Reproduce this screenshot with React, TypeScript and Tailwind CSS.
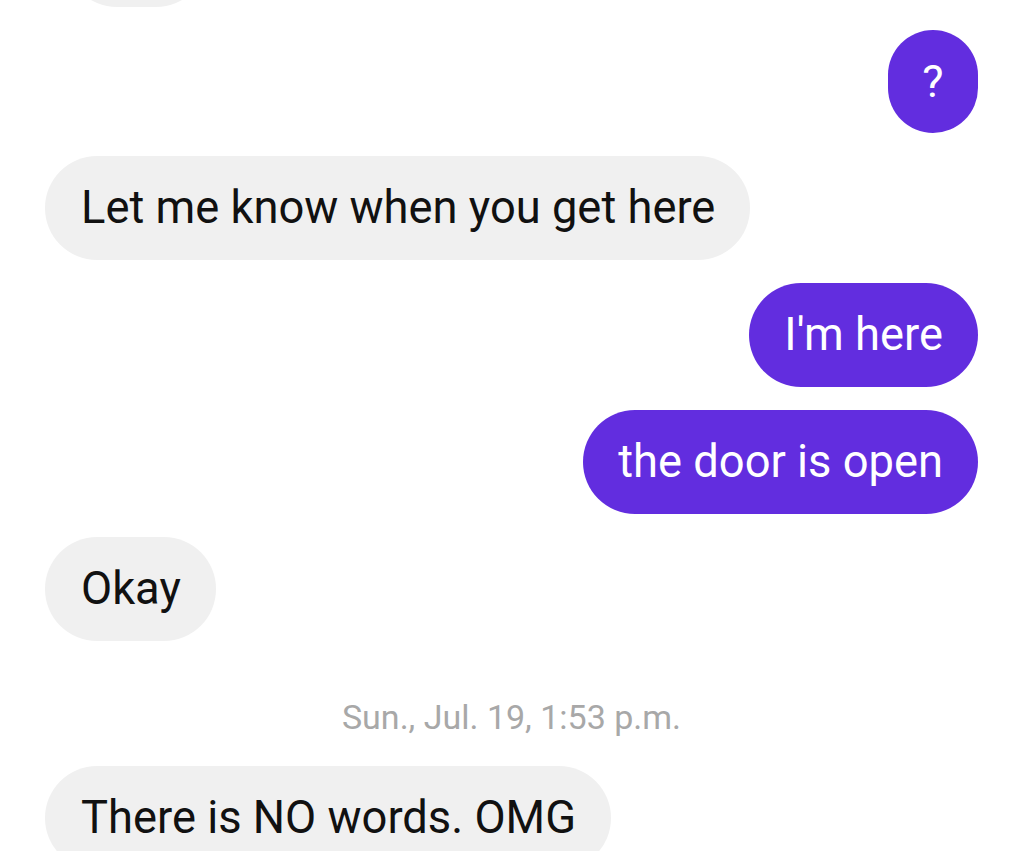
import React from "react";

const font = { fontFamily: "Roboto, 'Noto Sans', sans-serif" };

function Left({ text }: { text: string }) {
  return (
    <div className="flex justify-start">
      <div className="h-[104px] flex items-center rounded-full bg-[#f0f0f0] pl-[36px] pr-[35px] text-[45.3px] text-[#111111] leading-none">
        {text}
      </div>
    </div>
  );
}

function Right({ text }: { text: string }) {
  return (
    <div className="flex justify-end">
      <div className="h-[104px] flex items-center rounded-full bg-[#622ddf] px-[35px] text-[45.3px] text-white leading-none">
        {text}
      </div>
    </div>
  );
}

export default function App() {
  return (
    <div className="w-[1024px] h-[851px] overflow-hidden bg-white" style={font}>
      <div className="flex flex-col gap-[23px] pr-[46px] pl-[45px]">
        <div className="flex justify-start">
          <div className="ml-[20px] mt-[-97px] h-[104px] w-[143px] rounded-full bg-[#f0f0f0]" />
        </div>
        <div className="flex justify-end">
          <div className="h-[103px] w-[90px] flex items-center justify-center rounded-full bg-[#622ddf] text-[45px] text-white leading-none">
            ?
          </div>
        </div>
        <Left text="Let me know when you get here" />
        <Right text="I'm here" />
        <Right text="the door is open" />
        <Left text="Okay" />
        <div className="mt-[33px] mb-[6px] h-[40px] flex items-center justify-center text-[34px] text-[#a8a8a8] leading-none">
          Sun., Jul. 19, 1:53 p.m.
        </div>
        <Left text="There is NO words. OMG" />
      </div>
    </div>
  );
}
